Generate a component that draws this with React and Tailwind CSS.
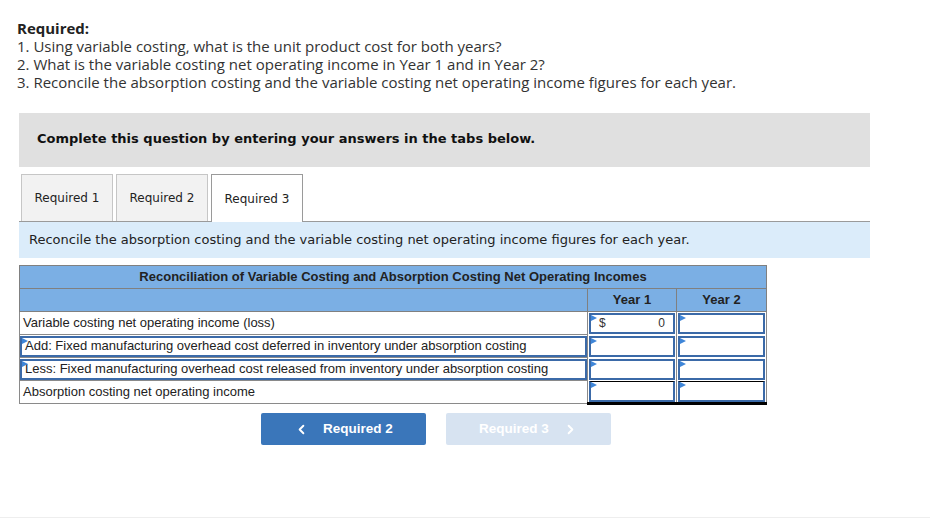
import { ChevronLeft, ChevronRight } from "lucide-react";

const rows = [
  { label: "Variable costing net operating income (loss)", blue: false, y1: "0", dollar: true },
  { label: "Add: Fixed manufacturing overhead cost deferred in inventory under absorption costing", blue: true },
  { label: "Less: Fixed manufacturing overhead cost released from inventory under absorption costing", blue: true },
  { label: "Absorption costing net operating income", blue: false, total: true },
];

function Flag() {
  return (
    <span className="absolute left-0 top-0 h-0 w-0 border-y-[3px] border-l-[6px] border-y-transparent border-l-[#3f86d8]" />
  );
}

function InputCell({ value, dollar, total }) {
  return (
    <td className={`relative h-[22px] border-l border-r border-[#8a8a8a] p-0 ${total ? "border-b-[3px] border-b-double border-b-black" : ""}`}>
      <div className={`relative mx-[1px] flex h-[21px] items-center border-2 border-[#3b6aa8] bg-white px-[8px] text-[12px] ${total ? "border-t-black border-t-[1px]" : ""}`}>
        <Flag />
        {dollar && <span className="text-[#333]">$</span>}
        {value && <span className="ml-auto text-[#333]">{value}</span>}
      </div>
    </td>
  );
}

export default function App() {
  return (
    <div className="min-h-[524px] w-[930px] bg-white text-[#222]">
      <div className="px-[17px] pt-[19px] font-['Open_Sans',sans-serif] text-[15px] leading-[18px] text-[#333]">
        <p className="font-bold text-[#222]">Required:</p>
        <p>1. Using variable costing, what is the unit product cost for both years?</p>
        <p>2. What is the variable costing net operating income in Year 1 and in Year 2?</p>
        <p>3. Reconcile the absorption costing and the variable costing net operating income figures for each year.</p>
      </div>

      <div className="ml-[19px] mt-[22px] w-[851px] font-['DejaVu_Sans',sans-serif]">
        <div className="flex h-[54px] items-center bg-[#e0e0e0] px-[18px] pb-[2px] text-[13px] font-bold text-[#111]">
          Complete this question by entering your answers in the tabs below.
        </div>

        <div className="mt-[7px] flex gap-[3px] border-b border-[#9a9a9a] pl-[2px] text-[12px] text-[#222]">
          <div className="flex h-[47px] w-[92px] items-center justify-center border border-b-0 border-[#c6c6c6] bg-[#f2f2f2]">Required 1</div>
          <div className="flex h-[47px] w-[92px] items-center justify-center border border-b-0 border-[#c6c6c6] bg-[#f2f2f2]">Required 2</div>
          <div className="-mb-px flex h-[48px] w-[92px] items-center justify-center border border-b-0 border-[#9a9a9a] bg-white">Required 3</div>
        </div>

        <div className="flex h-[36px] items-center bg-[#dbecfa] px-[10px] text-[13px] text-[#222]">
          Reconcile the absorption costing and the variable costing net operating income figures for each year.
        </div>

        <table className="mt-[7px] w-[748px] border-collapse font-['Liberation_Sans',Arial,sans-serif] text-[13px] text-[#222]">
          <thead>
            <tr className="h-[23px] bg-[#7bafe4]">
              <th colSpan={3} className="border border-[#808080] text-[13px] font-bold text-[#222]">
                Reconciliation of Variable Costing and Absorption Costing Net Operating Incomes
              </th>
            </tr>
            <tr className="h-[23px] bg-[#7bafe4]">
              <th className="border border-[#808080]" />
              <th className="w-[89px] border border-[#808080] text-[13px] font-bold">Year 1</th>
              <th className="w-[90px] border border-[#808080] text-[13px] font-bold">Year 2</th>
            </tr>
          </thead>
          <tbody>
            {rows.map((r) => (
              <tr key={r.label} className="h-[23px]">
                <td className="border border-[#8a8a8a] p-0">
                  <div className={`relative flex h-[21px] items-center px-[3px] ${r.blue ? "border-2 border-[#3b6aa8] px-[1px]" : ""}`}>
                    {r.blue && <Flag />}
                    {r.label}
                  </div>
                </td>
                <InputCell value={r.y1} dollar={r.dollar} total={r.total} />
                <InputCell total={r.total} />
              </tr>
            ))}
          </tbody>
        </table>

        <div className="mt-[8px] flex gap-[20px] pl-[242px] font-['Liberation_Sans',Arial,sans-serif] text-[13.5px] font-bold text-white">
          <button className="flex h-[32px] w-[165px] items-center justify-center gap-[14px] rounded-[2px] bg-[#3a76ba]">
            <ChevronLeft size={15} strokeWidth={3} />
            <span>Required 2</span>
          </button>
          <button className="flex h-[32px] w-[165px] items-center justify-center gap-[14px] rounded-[2px] bg-[#d7e3f1]">
            <span>Required 3</span>
            <ChevronRight size={15} strokeWidth={3} />
          </button>
        </div>
      </div>

      <div className="mt-[72px] border-t border-[#eeeeee]" />
    </div>
  );
}
